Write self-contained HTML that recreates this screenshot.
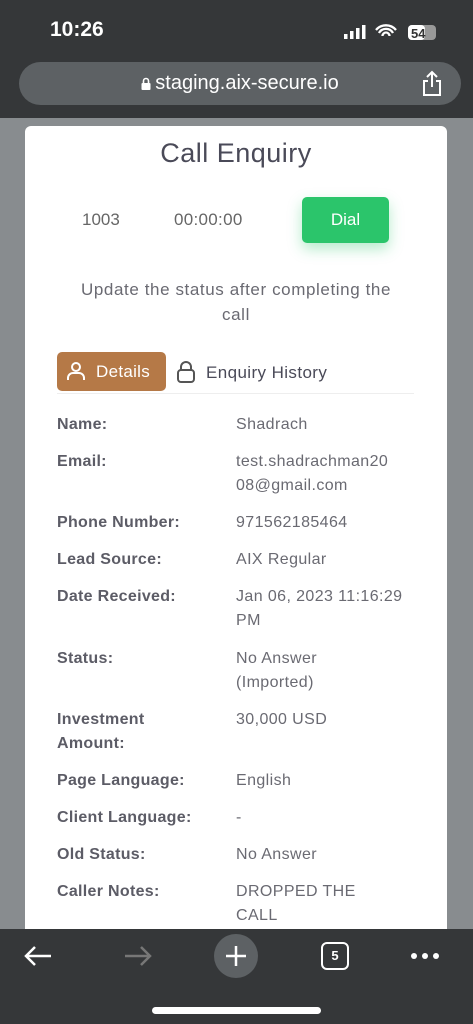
<!DOCTYPE html>
<html><head><meta charset="utf-8"><style>
*{margin:0;padding:0;box-sizing:border-box}
body{width:473px;height:1024px;overflow:hidden;background:#888c8f;font-family:"Liberation Sans",sans-serif;position:relative}
.a{position:absolute}
.top{left:0;top:0;width:473px;height:118px;background:#353739}
.url{left:19px;top:62px;width:442px;height:43px;border-radius:22px;background:#5d6164;color:#fff;font-size:20px;text-align:center;line-height:43px}
.card{left:25px;top:126px;width:422px;height:820px;background:#fff;border-radius:6px}
.lbl{left:57px;font-size:16px;font-weight:bold;color:#5c5c66;line-height:24px;letter-spacing:.3px}
.val{left:236px;font-size:16px;color:#6a6a72;line-height:24px;width:185px;letter-spacing:.4px}
.bot{left:0;top:929px;width:473px;height:95px;background:#353739}
</style></head><body>
<div class="a top"></div>
<div class="a" style="left:50px;top:18px;color:#fff;font-size:21px;font-weight:bold">10:26</div>
<svg class="a" style="left:344px;top:24px" width="95" height="18">
<rect x="0" y="10" width="3.5" height="5" fill="#fff"/><rect x="6" y="7" width="3.5" height="8" fill="#fff"/><rect x="12" y="4" width="3.5" height="11" fill="#fff"/><rect x="18" y="1" width="3.5" height="14" fill="#fff"/>
<path d="M32 6a13 13 0 0 1 20 0M35 9a8 8 0 0 1 14 0M38.5 12a3 3 0 0 1 7 0" stroke="#fff" stroke-width="2.3" fill="none"/>
<rect x="64" y="1" width="28" height="15" rx="4" fill="#999"/><rect x="64" y="1" width="17" height="15" rx="4" fill="#fff"/>
<text x="67" y="14" font-size="13" font-weight="bold" fill="#333" font-family="Liberation Sans">54</text></svg>
<div class="a url"><svg width="10" height="13" style="vertical-align:-1px;margin-right:4px"><path d="M2.5 6V4a2.5 2.5 0 0 1 5 0v2" stroke="#fff" stroke-width="1.6" fill="none"/><rect x="0.5" y="6" width="9" height="7" rx="1" fill="#fff"/></svg>staging.aix-secure.io</div>
<svg class="a" style="left:421px;top:70px" width="22" height="28"><path d="M11 2v15M6 7l5-5 5 5M7 11H3v14h16V11h-4" stroke="#fff" stroke-width="2" fill="none"/></svg>
<div class="a card"></div>
<div class="a" style="left:25px;width:422px;top:138px;text-align:center;font-size:27px;color:#4a4a58;letter-spacing:.5px">Call Enquiry</div>
<div class="a" style="left:82px;top:210px;font-size:17px;color:#666">1003</div>
<div class="a" style="left:174px;top:210px;font-size:17px;color:#666;letter-spacing:.3px">00:00:00</div>
<div class="a" style="left:302px;top:197px;width:87px;height:46px;background:#2bc56b;border-radius:5px;color:#fff;font-size:17px;text-align:center;line-height:46px;box-shadow:0 6px 14px rgba(43,197,107,.35)">Dial</div>
<div class="a" style="left:25px;width:422px;top:277px;text-align:center;font-size:17px;line-height:25px;color:#6a6a72;letter-spacing:.6px">Update the status after completing the<br>call</div>
<div class="a" style="left:57px;top:352px;width:109px;height:39px;background:#b57947;border-radius:5px;color:#fff;font-size:17px;line-height:39px;padding-left:39px;letter-spacing:.3px">Details</div>
<svg class="a" style="left:66px;top:361px" width="20" height="20"><circle cx="10" cy="6" r="4" stroke="#fff" stroke-width="2" fill="none"/><path d="M2 19v-2a5 5 0 0 1 5-5h6a5 5 0 0 1 5 5v2" stroke="#fff" stroke-width="2" fill="none"/></svg>
<svg class="a" style="left:176px;top:360px" width="20" height="24"><path d="M5 10V7a5 5 0 0 1 10 0v3" stroke="#555" stroke-width="2" fill="none"/><rect x="2" y="10" width="16" height="12" rx="3" stroke="#555" stroke-width="2" fill="none"/></svg>
<div class="a" style="left:206px;top:363px;font-size:17px;color:#4a4a58;letter-spacing:.4px">Enquiry History</div>
<div class="a" style="left:57px;top:393px;width:357px;height:1px;background:#eee"></div>
<div class="a lbl" style="top:413px">Name:</div><div class="a val" style="top:413px">Shadrach</div>
<div class="a lbl" style="top:450px">Email:</div><div class="a val" style="top:450px">test.shadrachman20<br>08@gmail.com</div>
<div class="a lbl" style="top:511px">Phone Number:</div><div class="a val" style="top:511px">971562185464</div>
<div class="a lbl" style="top:548px">Lead Source:</div><div class="a val" style="top:548px">AIX Regular</div>
<div class="a lbl" style="top:585px">Date Received:</div><div class="a val" style="top:585px">Jan 06, 2023 11:16:29<br>PM</div>
<div class="a lbl" style="top:647px">Status:</div><div class="a val" style="top:647px">No Answer<br>(Imported)</div>
<div class="a lbl" style="top:708px">Investment<br>Amount:</div><div class="a val" style="top:708px">30,000 USD</div>
<div class="a lbl" style="top:769px">Page Language:</div><div class="a val" style="top:769px">English</div>
<div class="a lbl" style="top:806px">Client Language:</div><div class="a val" style="top:806px">-</div>
<div class="a lbl" style="top:843px">Old Status:</div><div class="a val" style="top:843px">No Answer</div>
<div class="a lbl" style="top:880px">Caller Notes:</div><div class="a val" style="top:880px">DROPPED THE<br>CALL</div>
<div class="a bot"></div>
<svg class="a" style="left:22px;top:942px" width="32" height="28"><path d="M29 14H4M13 5l-9 9 9 9" stroke="#fff" stroke-width="2.5" fill="none"/></svg>
<svg class="a" style="left:122px;top:942px" width="32" height="28"><path d="M3 14h25M19 5l9 9-9 9" stroke="#777" stroke-width="2.5" fill="none"/></svg>
<div class="a" style="left:214px;top:934px;width:44px;height:44px;border-radius:50%;background:#5d6164"></div>
<svg class="a" style="left:214px;top:934px" width="44" height="44"><path d="M22 12v20M12 22h20" stroke="#fff" stroke-width="2.5"/></svg>
<div class="a" style="left:321px;top:942px;width:28px;height:28px;border:2.5px solid #fff;border-radius:6px;color:#fff;font-size:13px;font-weight:bold;text-align:center;line-height:23px">5</div>
<svg class="a" style="left:410px;top:950px" width="30" height="12"><circle cx="4" cy="6" r="3" fill="#fff"/><circle cx="15" cy="6" r="3" fill="#fff"/><circle cx="26" cy="6" r="3" fill="#fff"/></svg>
<div class="a" style="left:152px;top:1007px;width:169px;height:7px;border-radius:4px;background:#fff"></div>
</body></html>
